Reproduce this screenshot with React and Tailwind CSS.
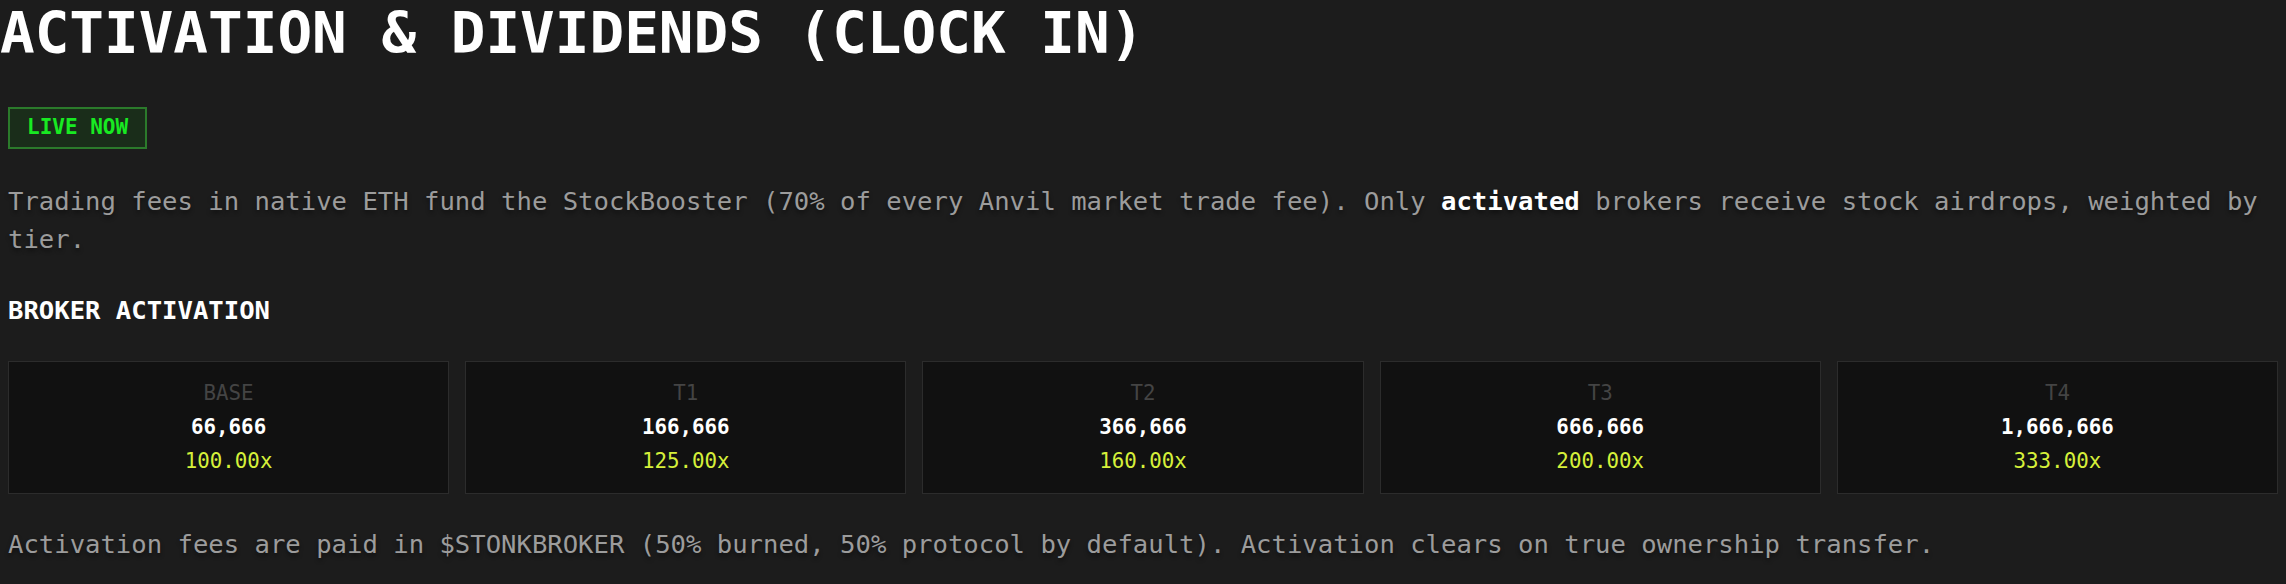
import React from "react";

const tiers = [
  { label: "BASE", amount: "66,666", mult: "100.00x" },
  { label: "T1", amount: "166,666", mult: "125.00x" },
  { label: "T2", amount: "366,666", mult: "160.00x" },
  { label: "T3", amount: "666,666", mult: "200.00x" },
  { label: "T4", amount: "1,666,666", mult: "333.00x" },
];

export default function App() {
  return (
    <div className="min-h-screen w-full bg-[#1c1c1c] pt-[2px] font-['DejaVu_Sans_Mono','Liberation_Mono',monospace]">
      <h1 className="whitespace-nowrap text-[57.6px] leading-[64px] font-bold text-white">
        ACTIVATION &amp; DIVIDENDS (CLOCK IN)
      </h1>
      <div className="px-[8px]">
        <div className="mt-[41px] inline-flex h-[42px] items-center border-2 border-[#2b7a2b] bg-[#1a2d1a] px-[17px] text-[21px] font-bold text-[#18ea22]">
          LIVE NOW
        </div>
        <p className="mt-[33px] text-[25.6px] leading-[38.4px] text-[#9c9c9c] [text-shadow:0_3px_4px_rgba(0,0,0,0.45)]">
          Trading fees in native ETH fund the StockBooster (70% of every Anvil market trade fee). Only{" "}
          <span className="font-bold text-white">activated</span> brokers receive stock airdrops, weighted by tier.
        </p>
        <h2 className="mt-[32px] text-[25.6px] leading-[38.4px] font-bold text-white">BROKER ACTIVATION</h2>
        <div className="mt-[32px] grid grid-cols-5 gap-[16px]">
          {tiers.map((t) => (
            <div
              key={t.label}
              className="flex flex-col items-center gap-[3px] border border-[#2c2c2c] bg-[#111111] p-[16px] text-[20.8px] leading-[31px]"
            >
              <div className="text-[#444444]">{t.label}</div>
              <div className="font-bold text-white">{t.amount}</div>
              <div className="text-[#d6f03a]">{t.mult}</div>
            </div>
          ))}
        </div>
        <p className="mt-[31px] text-[25.6px] leading-[38.4px] text-[#9c9c9c] [text-shadow:0_3px_4px_rgba(0,0,0,0.45)]">
          Activation fees are paid in $STONKBROKER (50% burned, 50% protocol by default). Activation clears on true ownership transfer.
        </p>
      </div>
    </div>
  );
}
